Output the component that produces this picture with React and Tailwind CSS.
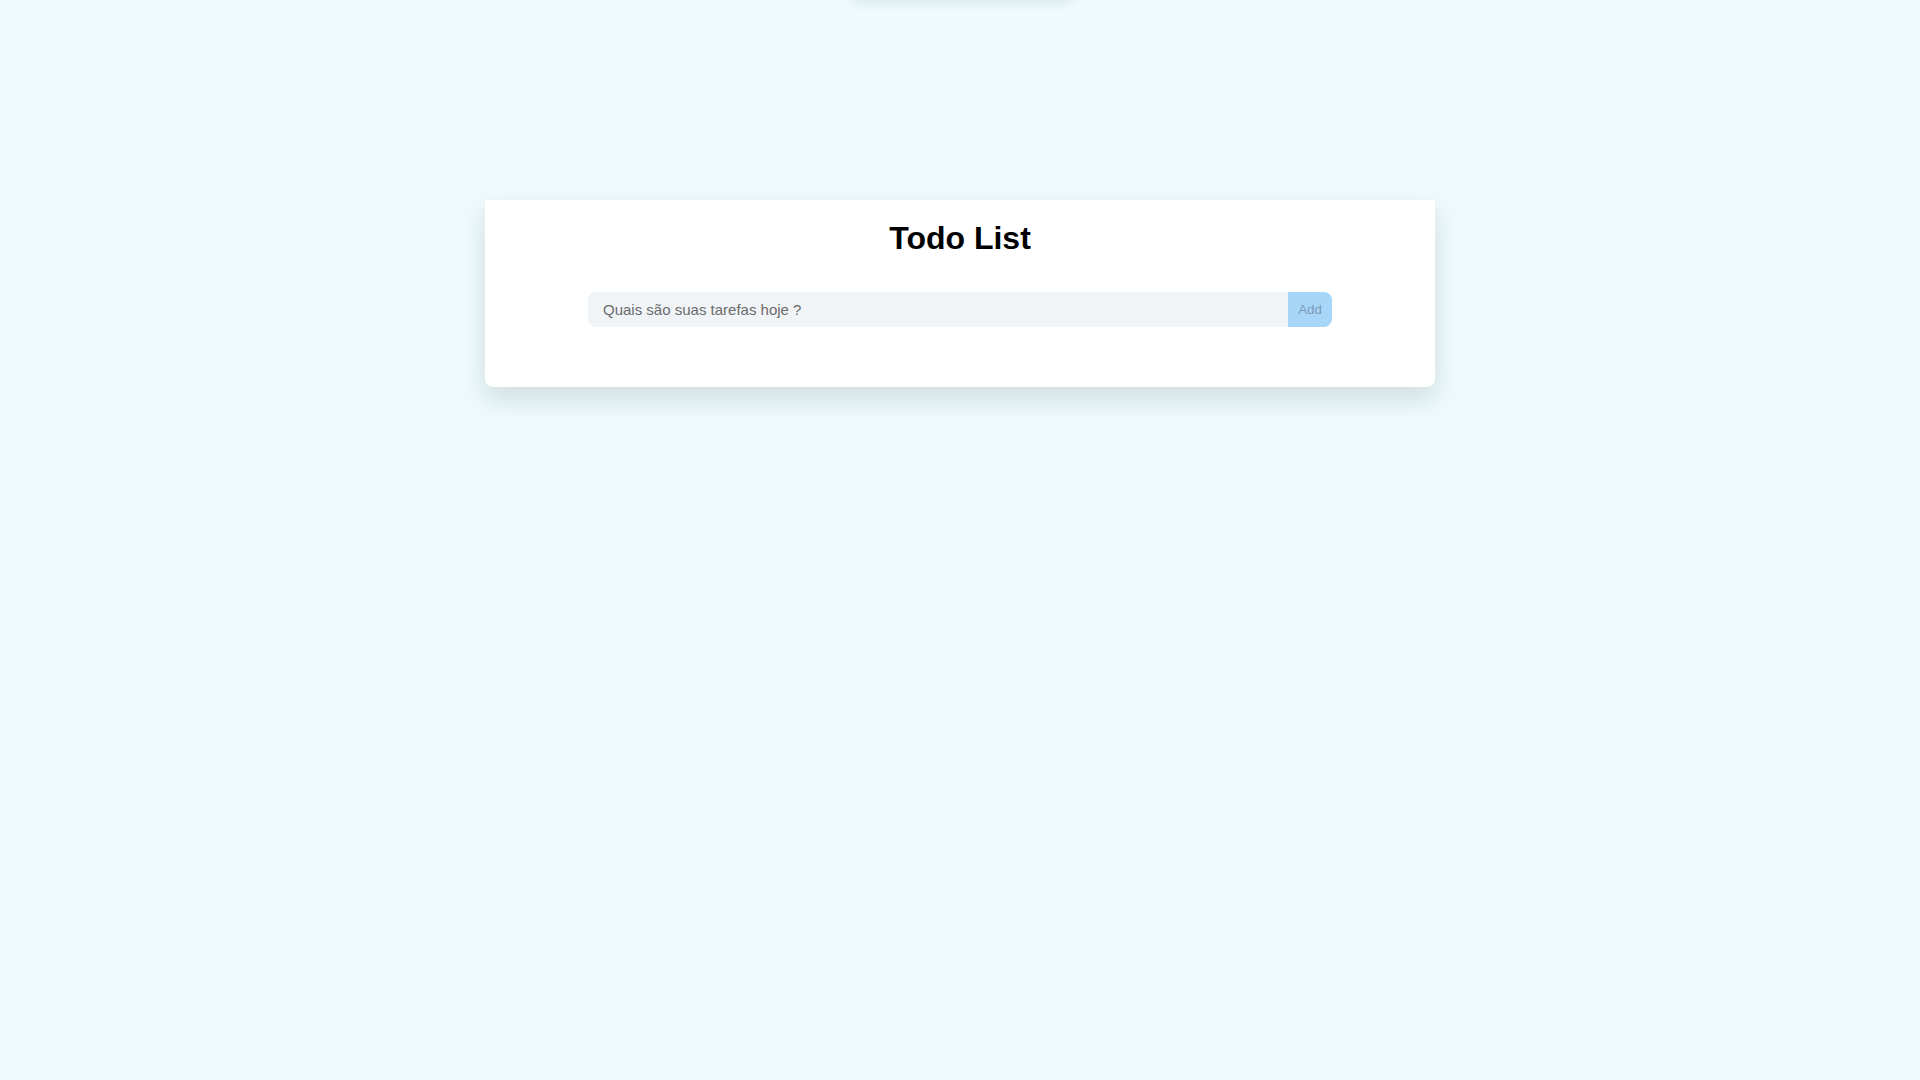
import React from "react";

export default function App() {
  return (
    <div className="relative min-h-screen w-full overflow-hidden bg-[#eefafc]" style={{ fontFamily: '"Liberation Sans", Arial, sans-serif' }}>
      <div className="absolute left-[850px] top-[-60px] h-[60px] w-[224px] rounded-lg bg-white shadow-[0_3px_12px_rgba(0,40,40,0.08)]"></div>
      <div className="flex justify-center pt-[200px]">
        <div className="flex h-[187px] w-[950px] flex-col items-center rounded-b-lg bg-white pt-[20px] shadow-[0_12px_26px_rgba(0,40,40,0.13)]">
          <h1 className="text-[32px] font-bold leading-[37px] text-black">Todo List</h1>
          <div className="mt-[35px] flex h-[35px] w-[744px]">
            <input
              type="text"
              placeholder="Quais são suas tarefas hoje ?"
              className="h-full flex-1 rounded-l-lg bg-[#f0f4f7] pl-[15px] text-[15px] text-[#333] outline-none placeholder:text-[#6b6b6b]"
            />
            <button className="h-full w-[44px] rounded-r-lg bg-[#a8d6f8] text-[13.33px] text-[#7d9bb8]">Add</button>
          </div>
        </div>
      </div>
    </div>
  );
}
